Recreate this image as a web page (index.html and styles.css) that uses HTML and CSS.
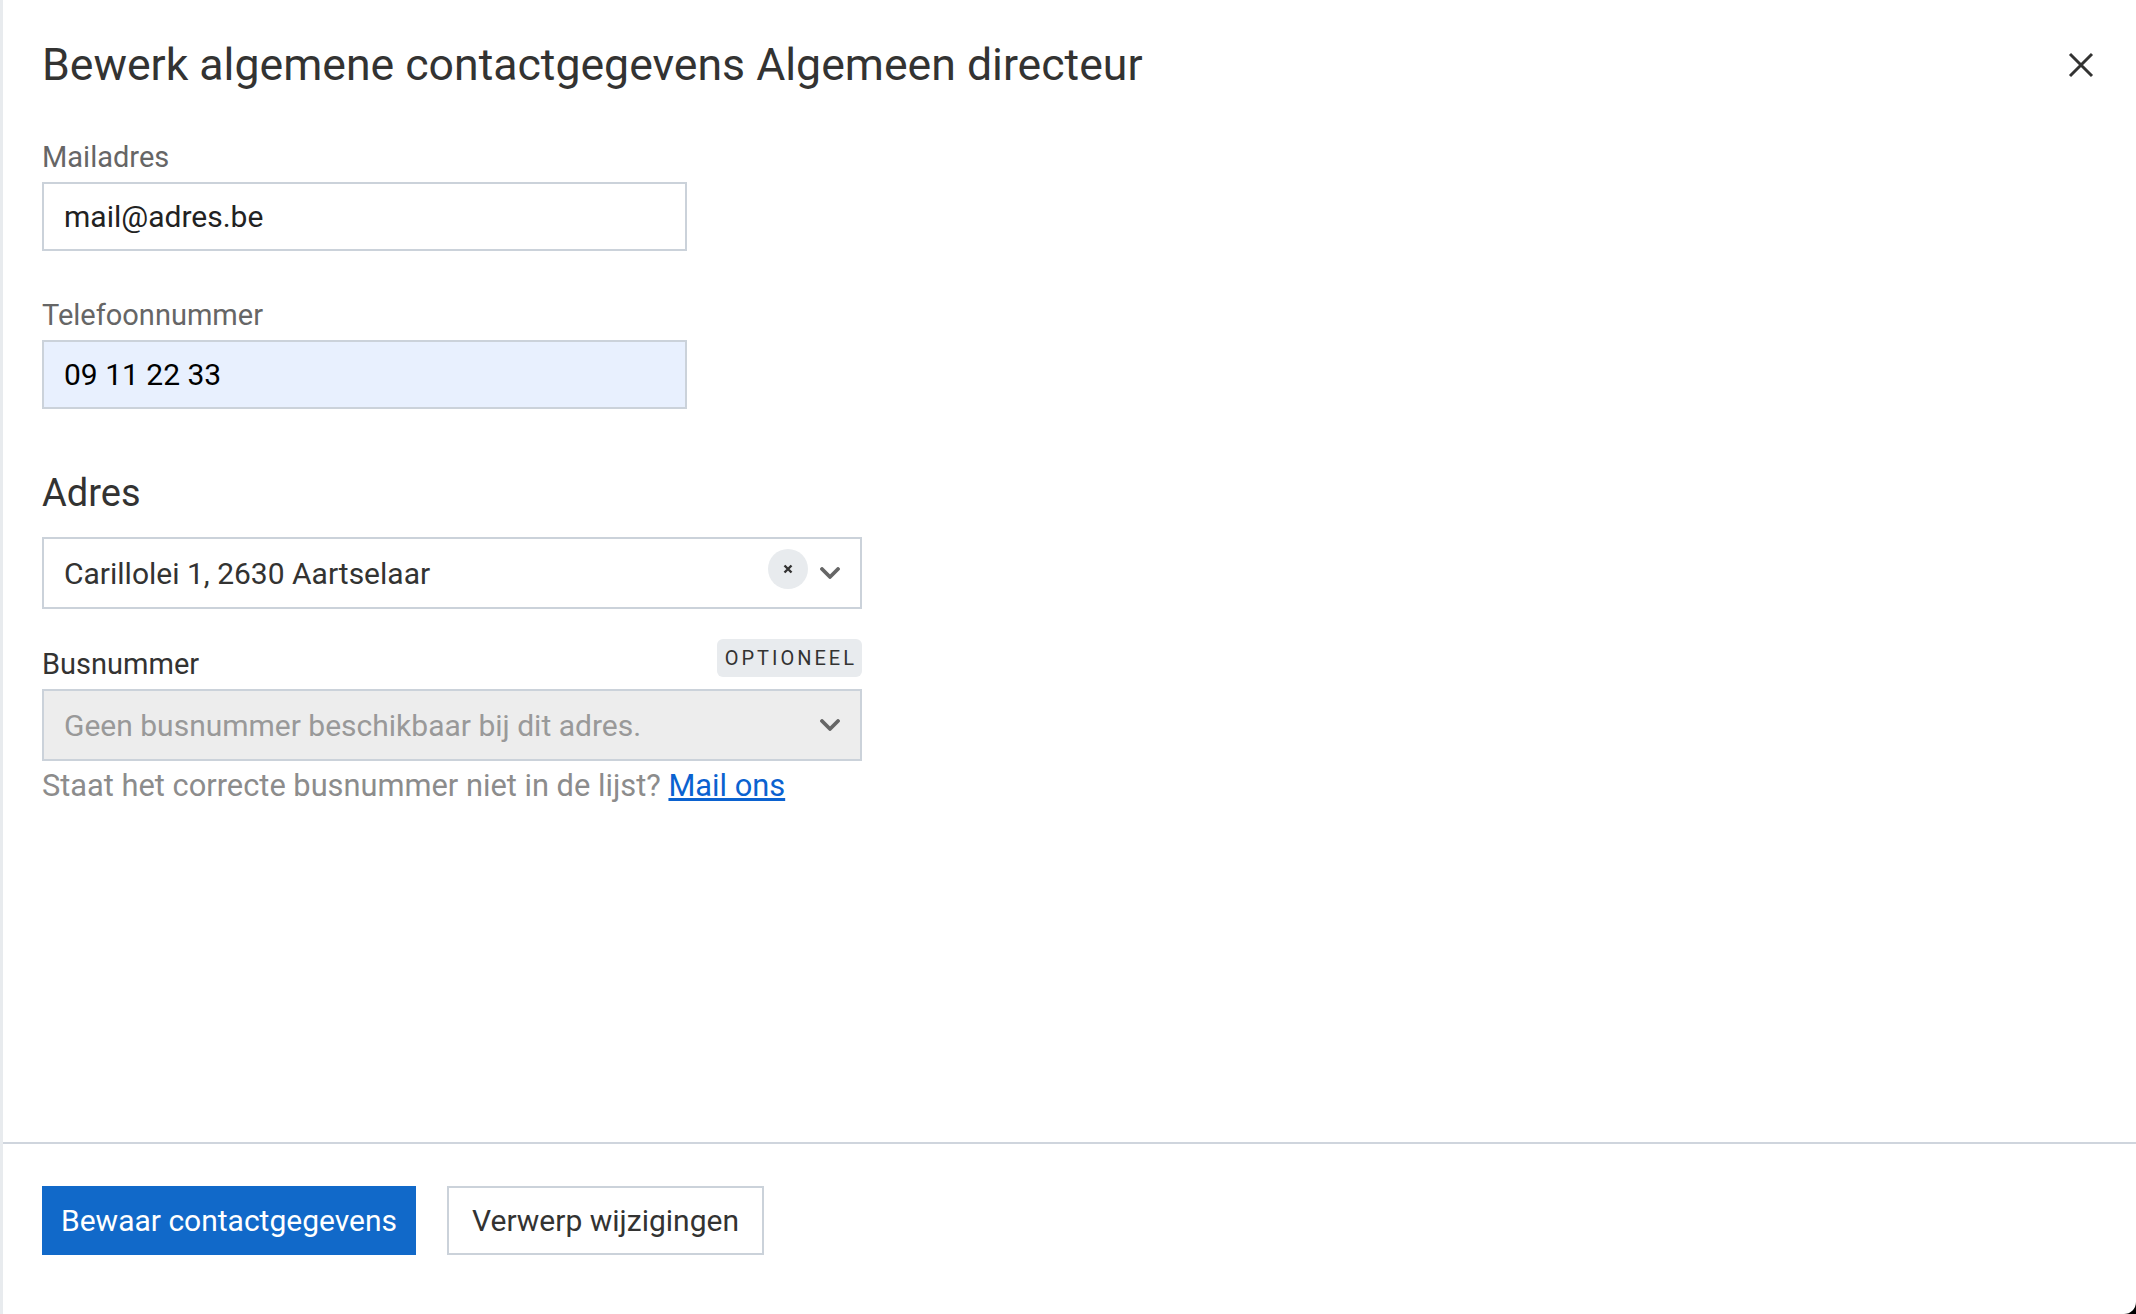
FILE: index.html
```html
<!DOCTYPE html>
<html lang="nl">
<head>
<meta charset="utf-8">
<title>Bewerk algemene contactgegevens</title>
<link rel="stylesheet" href="styles.css">
</head>
<body>
<div class="modal">
  <header class="modal-head">
    <h1 class="title">Bewerk algemene contactgegevens Algemeen directeur</h1>
    <button class="close" aria-label="Sluiten">
      <svg width="26" height="26" viewBox="0 0 26 26"><path d="M2 2 L24 24 M24 2 L2 24" stroke="#333332" stroke-width="3" fill="none"/></svg>
    </button>
  </header>
  <main class="modal-body">
    <div class="field">
      <label class="label label-muted">Mailadres</label>
      <div class="input">mail@adres.be</div>
    </div>
    <div class="field">
      <label class="label label-muted">Telefoonnummer</label>
      <div class="input input-autofill">09 11 22 33</div>
    </div>
    <h2 class="section-title">Adres</h2>
    <div class="select">
      <span class="select-value">Carillolei 1, 2630 Aartselaar</span>
      <span class="select-clear">
        <svg width="10" height="10" viewBox="0 0 10 10"><path d="M1.5 1.5 L8.5 8.5 M8.5 1.5 L1.5 8.5" stroke="#333" stroke-width="2.4" fill="none"/></svg>
      </span>
      <svg class="chevron" width="20" height="12" viewBox="0 0 20 12"><path d="M2 2 L10 10 L18 2" stroke="#666" stroke-width="3.8" fill="none" stroke-linecap="round" stroke-linejoin="round"/></svg>
    </div>
    <div class="label-row">
      <label class="label">Busnummer</label>
      <span class="badge">OPTIONEEL</span>
    </div>
    <div class="select select-disabled">
      <span class="select-value placeholder">Geen busnummer beschikbaar bij dit adres.</span>
      <svg class="chevron" width="20" height="12" viewBox="0 0 20 12"><path d="M2 2 L10 10 L18 2" stroke="#666" stroke-width="3.8" fill="none" stroke-linecap="round" stroke-linejoin="round"/></svg>
    </div>
    <p class="help">Staat het correcte busnummer niet in de lijst? <a href="#" class="link">Mail ons</a></p>
  </main>
  <footer class="modal-foot">
    <button class="btn btn-primary">Bewaar contactgegevens</button>
    <button class="btn btn-secondary">Verwerp wijzigingen</button>
  </footer>
</div>
</body>
</html>
```

FILE: styles.css
```css
html, body {
  margin: 0;
  padding: 0;
  height: 100%;
}
body {
  background: #000;
  font-family: Roboto, "Liberation Sans", sans-serif;
  color: #333332;
}
.modal {
  box-sizing: border-box;
  height: 1314px;
  background: #fff;
  border-left: 3px solid #e8ebee;
  border-bottom-right-radius: 12px;
  display: flex;
  flex-direction: column;
}
.modal-head {
  display: flex;
  align-items: center;
  justify-content: space-between;
  padding: 38px 42px 0 39px;
}
.title {
  margin: 0;
  font-size: 44.6px;
  line-height: 54px;
  font-weight: 400;
  color: #333332;
}
.close {
  border: 0;
  background: none;
  padding: 0;
  width: 26px;
  height: 26px;
  display: flex;
  cursor: pointer;
}
.modal-body {
  flex: 1;
  padding: 47px 0 0 39px;
  width: 820px;
  display: flex;
  flex-direction: column;
}
.field {
  display: flex;
  flex-direction: column;
  gap: 7px;
  margin-bottom: 46px;
}
.field + .field {
  margin-bottom: 61px;
}
.label {
  font-size: 29px;
  line-height: 36px;
  color: #333332;
}
.label-muted {
  color: #666;
}
.input {
  box-sizing: border-box;
  width: 645px;
  height: 69px;
  border: 2px solid #cbd2da;
  padding: 0 20px;
  font-size: 30px;
  display: flex;
  align-items: center;
  color: #222;
  background: #fff;
}
.input-autofill {
  background: #e8f0fe;
  color: #000;
}
.section-title {
  margin: 0 0 21px;
  font-size: 38px;
  line-height: 46px;
  font-weight: 400;
  color: #333332;
}
.select {
  box-sizing: border-box;
  height: 72px;
  border: 2px solid #cbd2da;
  padding: 0 20px;
  display: flex;
  align-items: center;
  font-size: 30px;
  color: #333332;
  background: #fff;
}
.select-value {
  flex: 1;
}
.select-clear {
  width: 40px;
  height: 40px;
  border-radius: 50%;
  background: #e8ebee;
  display: flex;
  align-items: center;
  justify-content: center;
  margin: -8px 12px 0 0;
}
.chevron {
  display: block;
}
.label-row {
  display: flex;
  justify-content: space-between;
  align-items: flex-end;
  margin-top: 30px;
  margin-bottom: 12px;
}
.label-row .label {
  margin-bottom: -5px;
}
.badge {
  font-size: 20px;
  letter-spacing: 3px;
  line-height: 38px;
  padding: 0 5px 0 8px;
  background: #e8ebee;
  border-radius: 6px;
  color: #333332;
}
.select-disabled {
  height: 72px;
  background: #ededed;
}
.placeholder {
  color: #999;
}
.help {
  margin: 7px 0 0;
  font-size: 30.8px;
  line-height: 36px;
  color: #8c8c8c;
}
.link {
  color: #0b62d0;
  text-decoration: underline;
}
.modal-foot {
  border-top: 2px solid #cfd5dd;
  padding: 42px 39px 59px;
  display: flex;
  gap: 31px;
}
.btn {
  box-sizing: border-box;
  height: 69px;
  font-family: Roboto, "Liberation Sans", sans-serif;
  font-size: 30px;
  padding: 0 19px;
  cursor: pointer;
}
.btn-primary {
  background: #1169c9;
  color: #fff;
  border: 0;
  padding: 0 19px;
}
.btn-secondary {
  background: #fff;
  color: #333332;
  border: 2px solid #cbd2da;
  padding: 0 23px;
}
```
